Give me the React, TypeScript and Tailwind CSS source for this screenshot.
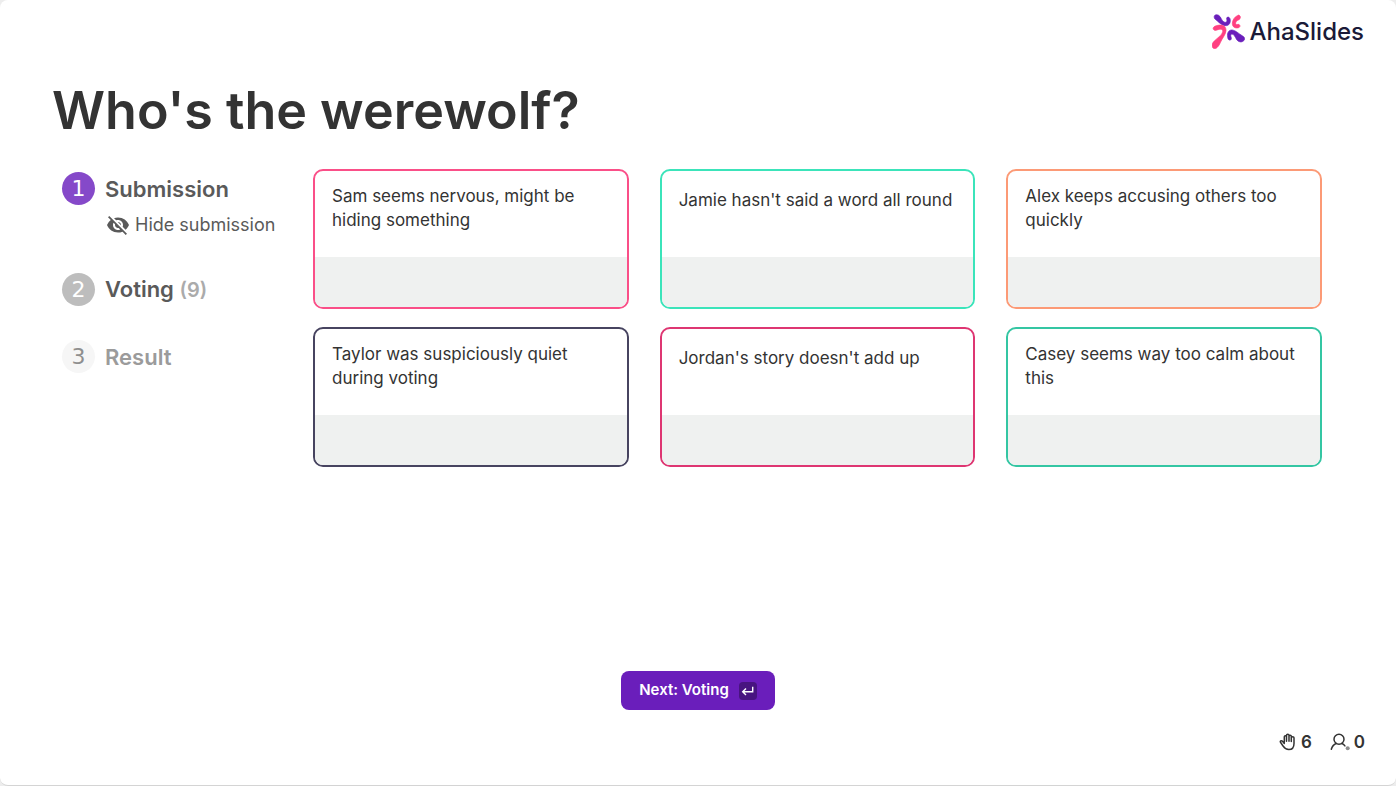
import { useState } from "react";
import { MdVisibilityOff } from "react-icons/md";

const answers = [
  { text: "Sam seems nervous, might be hiding something", border: "border-[#fa4f88]" },
  { text: "Jamie hasn't said a word all round", border: "border-[#3be4ba]" },
  { text: "Alex keeps accusing others too quickly", border: "border-[#fc9a76]" },
  { text: "Taylor was suspiciously quiet during voting", border: "border-[#474460]" },
  { text: "Jordan's story doesn't add up", border: "border-[#de3672]" },
  { text: "Casey seems way too calm about this", border: "border-[#34c6a3]" },
];

function Logo() {
  return (
    <a href="#" className="flex items-center gap-1 text-[#1a1a38]">
      <svg viewBox="0 0 99 105" className="h-[35px] w-[33px]" aria-hidden="true">
        <g fill="#6a1ebb" stroke="#6a1ebb" strokeWidth="2">
          <path d="M8 14C3 4 12-1 20 4C28 9 28 20 36 24C44 27 46 22 44 15C43 8 51 7 54 14C57 25 52 36 40 35C28 34 21 25 8 14Z" />
          <path d="M94 81C88 86 80 84 74 77C69 68 66 61 60 60C55 60 56 67 58 72C59 79 51 81 48 74C44 60 48 49 58 48C69 47 80 59 92 66C99 70 100 77 94 81Z" />
        </g>
        <g fill="#ff4081" stroke="#ff4081" strokeWidth="2">
          <path d="M82 4C87 8 86 14 81 17C74 20 71 22 71 28C71 33 74 32 78 31C85 31 86 39 80 41C70 44 61 39 61 29C61 17 69 8 76 5C78 3 80 3 82 4Z" />
          <path d="M3 102C-2 96 0 88 6 82C14 73 30 64 32 53C33 45 26 45 18 47C12 49 7 51 4 46C1 40 9 35 18 34C32 31 43 37 42 50C41 62 31 72 25 86C20 97 12 108 3 102Z" />
        </g>
      </svg>
      <span className="text-[24px] leading-8 font-medium">AhaSlides</span>
    </a>
  );
}

function Step({ number, circle, children }: { number: number; circle: string; children: React.ReactNode }) {
  return (
    <div className="flex items-center gap-[10px]">
      <span
        className={`flex size-[33px] shrink-0 items-center justify-center rounded-full font-['DejaVu_Sans',sans-serif] text-[22px] leading-none ${circle}`}
      >
        {number}
      </span>
      <h2 className="text-[22px] leading-8 font-semibold whitespace-nowrap">{children}</h2>
    </div>
  );
}

export default function App() {
  const [hidden, setHidden] = useState(false);

  return (
    <div className="min-h-screen bg-[#ededed] font-['Inter',sans-serif] text-[#333333]">
      <main className="flex min-h-screen flex-col rounded-lg border-b border-[#d4d4d4] bg-white">
        <header className="flex justify-end px-8 pt-[14px]">
          <Logo />
        </header>

        <h1 className="mt-[30px] px-[52px] text-[52px] leading-[64px] font-semibold">Who's the werewolf?</h1>

        <div className="mt-[26px] flex items-start pr-[74px] pl-[62px]">
          <aside className="w-[251px] shrink-0 pt-[3px] text-[#5a5a5a]">
            <Step number={1} circle="bg-[#8549c9] text-white">
              Submission
            </Step>
            <button
              type="button"
              onClick={() => setHidden(!hidden)}
              className="mt-2 ml-[44px] flex items-center gap-[5px] text-[18px] leading-6 whitespace-nowrap"
            >
              <MdVisibilityOff className="size-6" aria-hidden="true" />
              {hidden ? "Show submission" : "Hide submission"}
            </button>
            <div className="mt-9">
              <Step number={2} circle="bg-[#bdbdbd] text-white">
                Voting <span className="text-[20px] text-[#ababab]">(9)</span>
              </Step>
            </div>
            <div className="mt-[34px] text-[#9b9b9b]">
              <Step number={3} circle="bg-[#f6f6f6] text-[#8f8f8f]">
                Result
              </Step>
            </div>
          </aside>

          <ul className="grid grow grid-cols-3 gap-x-[31px] gap-y-[18px]">
            {answers.map((answer) => (
              <li
                key={answer.text}
                className={`flex min-h-[140px] flex-col overflow-hidden rounded-[10px] border-2 ${answer.border}`}
              >
                <div className="grow px-[17px] pt-[13px]">
                  <p className={`flex min-h-8 items-center text-[17px] leading-6 ${hidden ? "invisible" : ""}`}>
                    {answer.text}
                  </p>
                </div>
                <div className="h-[50px] bg-[#eff1f0]" />
              </li>
            ))}
          </ul>
        </div>

        <footer className="mt-auto pb-[31px]">
          <div className="flex justify-center">
            <button
              type="button"
              className="flex h-[39px] items-center gap-[10px] rounded-lg bg-[#6a1ebb] px-[18px] text-[15px] font-semibold text-white"
            >
              Next: Voting
              <span className="flex size-[18px] items-center justify-center rounded bg-[#481480]">
                <svg viewBox="0 0 18 18" className="size-[18px]" fill="none" stroke="currentColor" strokeWidth="1.4" aria-hidden="true">
                  <path d="M13.7 4.7v5.1H4M7 6.5L3.7 9.8L7 13.1" />
                </svg>
              </span>
            </button>
          </div>
          <div className="mt-[20px] flex justify-end gap-[18px] px-[31px] text-[17px] leading-6 font-semibold">
            <span className="flex items-center gap-1">
              <svg viewBox="0 0 18 18" className="size-[18px]" fill="none" stroke="currentColor" strokeWidth="1.5" strokeLinecap="round" strokeLinejoin="round" aria-hidden="true">
                <path d="M5.3 9.5V3.8C5.3 2.4 7.5 2.4 7.5 3.8V8.2M7.5 3.8V2.2C7.5 .8 10 .8 10 2.2V8.2M10 3.2C10 1.8 12.3 1.8 12.3 3.2V8.6M12.3 4.8C12.3 3.4 15 3.4 15 4.8V10.5C15 14.5 12.8 16.6 9.8 16.6C6.8 16.6 5.6 15.4 4.2 13.2L1.5 9.3C.7 8.1 2.3 7.1 3.3 8.1L5.3 10.4" />
              </svg>
              6
            </span>
            <span className="flex items-center gap-1">
              <svg viewBox="0 0 20 18" className="h-[18px] w-[20px]" fill="none" stroke="currentColor" strokeWidth="1.5" strokeLinecap="round" aria-hidden="true">
                <circle cx="9" cy="6.3" r="5" />
                <path d="M1.3 16.3C2.3 13 4.2 11.3 6.2 10.5M11.8 10.5C13.1 11 14.1 11.8 14.9 12.9" />
                <circle cx="17.7" cy="15.2" r="2" fill="#8d8d8d" stroke="none" />
              </svg>
              0
            </span>
          </div>
        </footer>
      </main>
    </div>
  );
}
